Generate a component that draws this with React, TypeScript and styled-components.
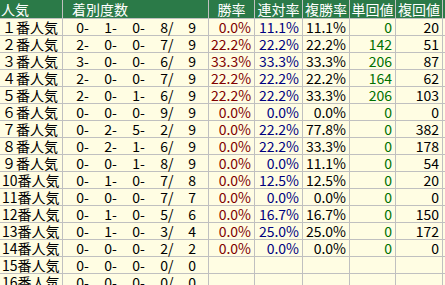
import React from "react";
import styled, { createGlobalStyle } from "styled-components";

const Global = createGlobalStyle`
  html, body { margin: 0; padding: 0; background: #ffffff; overflow: hidden; }
  body { font-family: "Noto Sans CJK JP", sans-serif; }
`;

const Grid = styled.div`
  display: grid;
  grid-template-columns: 62px 145px 45px 47px 46px 45px 46px 2px;
  grid-template-rows: 18px;
  grid-auto-rows: 16px;
  gap: 1px;
  background: #c0c0c0;
  width: max-content;
  font-size: 14px;
  line-height: 16px;
`;

const Head = styled.div<{ $align?: "left" | "center"; $pad?: number }>`
  background: #2b7a48;
  color: #ffffff;
  font-size: 14px;
  line-height: 18px;
  white-space: nowrap;
  text-align: ${(p) => p.$align ?? "center"};
  padding-left: ${(p) => p.$pad ?? 0}px;
`;

const Cell = styled.div<{ $color?: string; $align?: "left" | "right" }>`
  background: #fffde3;
  color: ${(p) => p.$color ?? "#000000"};
  text-align: ${(p) => p.$align ?? "right"};
  padding: 0 3px 0 2px;
  white-space: nowrap;
`;

const Tally = styled.div`
  background: #fffde3;
  display: flex;
  white-space: nowrap;
`;

const TallyPart = styled.span<{ $w: number }>`
  display: inline-block;
  width: ${(p) => p.$w}px;
  text-align: right;
  flex: none;
`;

const Sep = styled.span`
  display: inline-block;
  width: 7px;
  text-align: left;
`;

type Row = {
  label: string;
  tally: [number, number, number, number, number];
  win?: string;
  ren?: string;
  fuku?: string;
  tan?: string;
  fukuv?: string;
};

const rows: Row[] = [
  { label: "１番人気", tally: [0, 1, 0, 8, 9], win: "0.0%", ren: "11.1%", fuku: "11.1%", tan: "0", fukuv: "20" },
  { label: "２番人気", tally: [2, 0, 0, 7, 9], win: "22.2%", ren: "22.2%", fuku: "22.2%", tan: "142", fukuv: "51" },
  { label: "３番人気", tally: [3, 0, 0, 6, 9], win: "33.3%", ren: "33.3%", fuku: "33.3%", tan: "206", fukuv: "87" },
  { label: "４番人気", tally: [2, 0, 0, 7, 9], win: "22.2%", ren: "22.2%", fuku: "22.2%", tan: "164", fukuv: "62" },
  { label: "５番人気", tally: [2, 0, 1, 6, 9], win: "22.2%", ren: "22.2%", fuku: "33.3%", tan: "206", fukuv: "103" },
  { label: "６番人気", tally: [0, 0, 0, 9, 9], win: "0.0%", ren: "0.0%", fuku: "0.0%", tan: "0", fukuv: "0" },
  { label: "７番人気", tally: [0, 2, 5, 2, 9], win: "0.0%", ren: "22.2%", fuku: "77.8%", tan: "0", fukuv: "382" },
  { label: "８番人気", tally: [0, 2, 1, 6, 9], win: "0.0%", ren: "22.2%", fuku: "33.3%", tan: "0", fukuv: "178" },
  { label: "９番人気", tally: [0, 0, 1, 8, 9], win: "0.0%", ren: "0.0%", fuku: "11.1%", tan: "0", fukuv: "54" },
  { label: "10番人気", tally: [0, 1, 0, 7, 8], win: "0.0%", ren: "12.5%", fuku: "12.5%", tan: "0", fukuv: "20" },
  { label: "11番人気", tally: [0, 0, 0, 7, 7], win: "0.0%", ren: "0.0%", fuku: "0.0%", tan: "0", fukuv: "0" },
  { label: "12番人気", tally: [0, 1, 0, 5, 6], win: "0.0%", ren: "16.7%", fuku: "16.7%", tan: "0", fukuv: "150" },
  { label: "13番人気", tally: [0, 1, 0, 3, 4], win: "0.0%", ren: "25.0%", fuku: "25.0%", tan: "0", fukuv: "172" },
  { label: "14番人気", tally: [0, 0, 0, 2, 2], win: "0.0%", ren: "0.0%", fuku: "0.0%", tan: "0", fukuv: "0" },
  { label: "15番人気", tally: [0, 0, 0, 0, 0] },
  { label: "16番人気", tally: [0, 0, 0, 0, 0] },
];

export default function App() {
  return (
    <>
      <Global />
      <Grid>
        <Head $align="left" $pad={1}>人気</Head>
        <Head $align="left" $pad={9}>着別度数</Head>
        <Head>勝率</Head>
        <Head>連対率</Head>
        <Head>複勝率</Head>
        <Head>単回値</Head>
        <Head>複回値</Head>
        <Head />
        {rows.map((r) => (
          <React.Fragment key={r.label}>
            <Cell $align="left">{r.label}</Cell>
            <Tally>
              <TallyPart $w={21}>{r.tally[0]}</TallyPart><Sep>-</Sep>
              <TallyPart $w={21}>{r.tally[1]}</TallyPart><Sep>-</Sep>
              <TallyPart $w={21}>{r.tally[2]}</TallyPart><Sep>-</Sep>
              <TallyPart $w={21}>{r.tally[3]}</TallyPart><Sep>/</Sep>
              <TallyPart $w={21}>{r.tally[4]}</TallyPart>
            </Tally>
            <Cell $color="#800000">{r.win ?? ""}</Cell>
            <Cell $color="#000080">{r.ren ?? ""}</Cell>
            <Cell>{r.fuku ?? ""}</Cell>
            <Cell $color="#007000">{r.tan ?? ""}</Cell>
            <Cell>{r.fukuv ?? ""}</Cell>
            <Cell />
          </React.Fragment>
        ))}
      </Grid>
    </>
  );
}
